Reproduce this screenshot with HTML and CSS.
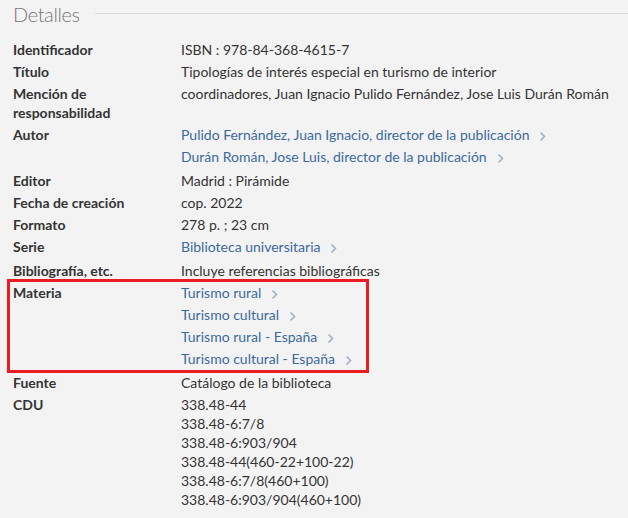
FILE: index.html
```html
<!DOCTYPE html>
<html lang="es">
<head>
    <meta charset="UTF-8">
    <title>Detalles</title>
    <link rel="stylesheet" href="styles.css">
</head>
<body>

    <!-- Cabecera de la sección -->
    <div class="section-head">
        <h2>Detalles</h2>
        <div class="section-line"></div>
    </div>

    <!-- Lista de detalles -->
    <dl class="details">
        <div class="row">
            <dt>Identificador</dt>
            <dd><span class="val">ISBN : 978-84-368-4615-7</span></dd>
        </div>
        <div class="row">
            <dt>Título</dt>
            <dd><span class="val">Tipologías de interés especial en turismo de interior</span></dd>
        </div>
        <div class="row">
            <dt>Mención de responsabilidad</dt>
            <dd><span class="val">coordinadores, Juan Ignacio Pulido Fernández, Jose Luis Durán Román</span></dd>
        </div>
        <div class="row">
            <dt>Autor</dt>
            <dd>
                <a class="link" href="#">Pulido Fernández, Juan Ignacio, director de la publicación<svg class="chev" viewBox="0 0 7 11"><polyline points="1.5,1.5 5.5,5.5 1.5,9.5"/></svg></a>
                <a class="link" href="#">Durán Román, Jose Luis, director de la publicación<svg class="chev" viewBox="0 0 7 11"><polyline points="1.5,1.5 5.5,5.5 1.5,9.5"/></svg></a>
            </dd>
        </div>
        <div class="row">
            <dt>Editor</dt>
            <dd><span class="val">Madrid : Pirámide</span></dd>
        </div>
        <div class="row">
            <dt>Fecha de creación</dt>
            <dd><span class="val">cop. 2022</span></dd>
        </div>
        <div class="row">
            <dt>Formato</dt>
            <dd><span class="val">278 p. ; 23 cm</span></dd>
        </div>
        <div class="row">
            <dt>Serie</dt>
            <dd>
                <a class="link" href="#">Biblioteca universitaria<svg class="chev" viewBox="0 0 7 11"><polyline points="1.5,1.5 5.5,5.5 1.5,9.5"/></svg></a>
            </dd>
        </div>
        <div class="row">
            <dt>Bibliografía, etc.</dt>
            <dd><span class="val">Incluye referencias bibliográficas</span></dd>
        </div>
        <div class="row highlight">
            <dt>Materia</dt>
            <dd>
                <a class="link" href="#">Turismo rural<svg class="chev" viewBox="0 0 7 11"><polyline points="1.5,1.5 5.5,5.5 1.5,9.5"/></svg></a>
                <a class="link" href="#">Turismo cultural<svg class="chev" viewBox="0 0 7 11"><polyline points="1.5,1.5 5.5,5.5 1.5,9.5"/></svg></a>
                <a class="link" href="#">Turismo rural - España<svg class="chev" viewBox="0 0 7 11"><polyline points="1.5,1.5 5.5,5.5 1.5,9.5"/></svg></a>
                <a class="link" href="#">Turismo cultural - España<svg class="chev" viewBox="0 0 7 11"><polyline points="1.5,1.5 5.5,5.5 1.5,9.5"/></svg></a>
            </dd>
        </div>
        <div class="row">
            <dt>Fuente</dt>
            <dd><span class="val">Catálogo de la biblioteca</span></dd>
        </div>
        <div class="row">
            <dt>CDU</dt>
            <dd>
                <span class="val">338.48-44</span>
                <span class="val">338.48-6:7/8</span>
                <span class="val">338.48-6:903/904</span>
                <span class="val">338.48-44(460-22+100-22)</span>
                <span class="val">338.48-6:7/8(460+100)</span>
                <span class="val">338.48-6:903/904(460+100)</span>
            </dd>
        </div>
    </dl>

</body>
</html>
```

FILE: styles.css
```css
body {
    margin: 0;
    background: #f3f3f3;
    font-family: Lato, "Open Sans", sans-serif;
    font-size: 14px;
    color: #333;
    overflow: hidden;
}

/* Cabecera */
.section-head {
    display: flex;
    align-items: center;
    gap: 15px;
    padding: 0 0 0 13px;
    height: 27px;
}

.section-head h2 {
    margin: 0;
    font-size: 20px;
    font-weight: 300;
    letter-spacing: -0.4px;
    color: #777;
}

.section-line {
    flex: 1;
    height: 1px;
    background: #d9d9d9;
}

/* Lista */
.details {
    margin: 13px 0 0 13px;
}

.row {
    display: grid;
    grid-template-columns: 168px 1fr;
    margin-bottom: 3px;
    line-height: 19px;
}

.row dt {
    font-weight: bold;
    color: #333;
    padding-right: 20px;
}

.row dd {
    margin: 0;
    display: flex;
    flex-direction: column;
    align-items: flex-start;
    gap: 1px;
}

.row dd .val + .val {
    margin-top: -1px;
}

.val {
    display: block;
}

.link {
    display: flex;
    align-items: center;
    color: #3b6a9c;
    text-decoration: none;
    padding-bottom: 2px;
}

.chev {
    width: 7px;
    height: 11px;
    margin-left: 10px;
    margin-top: 3px;
    fill: none;
    stroke: #9db2c7;
    stroke-width: 1.6;
}

/* Cadre rouge autour de Materia */
.highlight {
    position: relative;
}

.highlight::after {
    content: "";
    position: absolute;
    left: -6px;
    top: -4px;
    width: 356px;
    height: 88px;
    border: 3px solid #ea1c24;
    pointer-events: none;
}
```
